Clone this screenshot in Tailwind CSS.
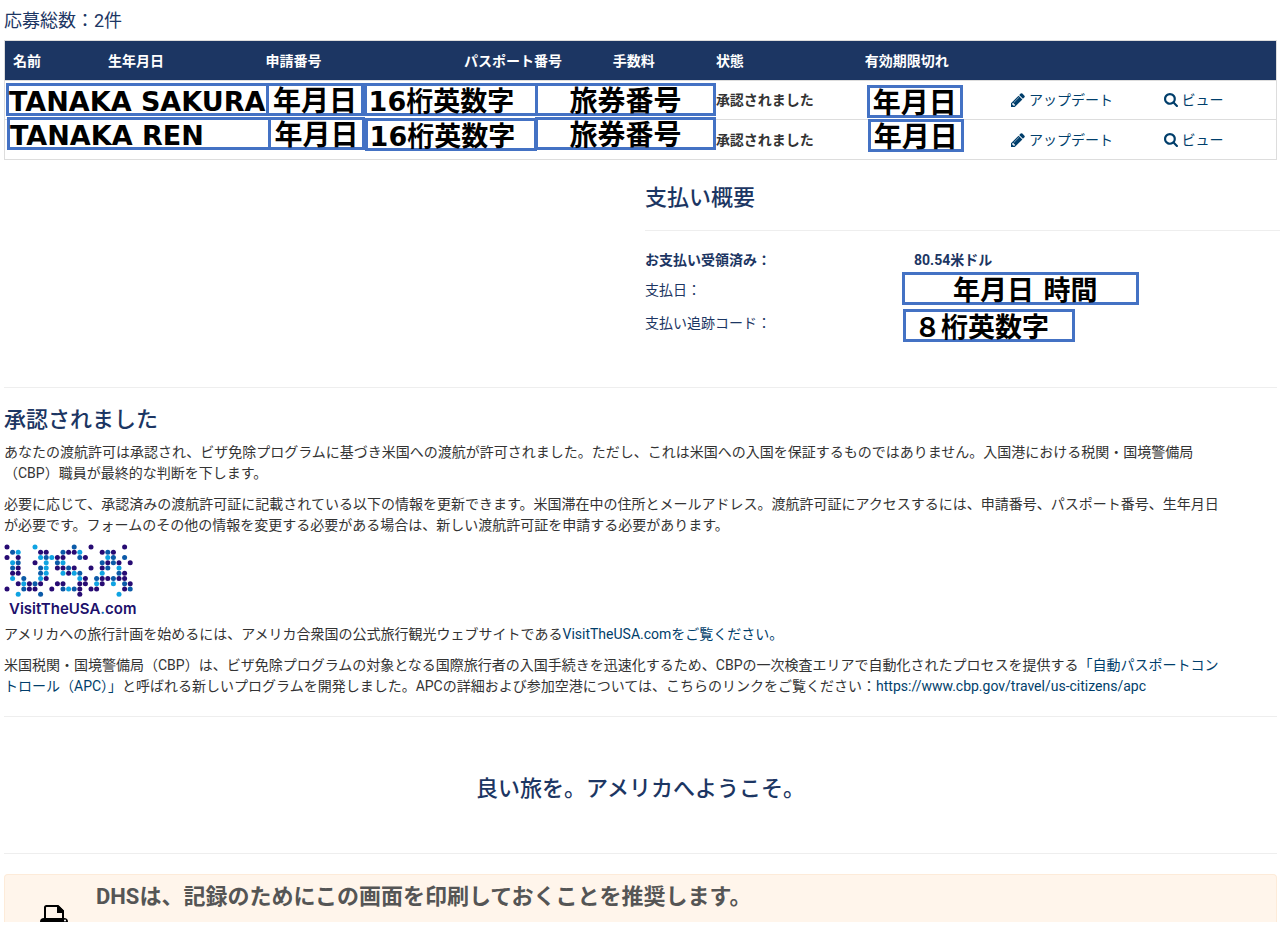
<!DOCTYPE html>
<html lang="ja">
<head>
<meta charset="utf-8">
<meta name="viewport" content="width=device-width, initial-scale=1">
<title>応募総数</title>
<script src="https://cdn.jsdelivr.net/npm/@tailwindcss/browser@4"></script>
</head>
<body class="bg-white font-[Roboto,'Noto_Sans_CJK_JP',sans-serif] text-sm text-[#333]">
<main class="overflow-x-hidden pl-1">
  <div class="mr-[5px]">
    <h1 class="pt-2 text-lg leading-[26px] text-[#1c3663]">応募総数：2件</h1>
    <table class="mt-1.5 w-full table-fixed border-collapse border border-[#ddd] text-left">
      <colgroup>
        <col class="w-[7.5%]"><col class="w-[12.4%]"><col class="w-[15.6%]"><col class="w-[11.7%]"><col class="w-[8.1%]"><col class="w-[11.7%]"><col class="w-[11.5%]"><col class="w-[12%]"><col>
      </colgroup>
      <thead class="bg-[#1c3663] text-white">
        <tr class="h-10 whitespace-nowrap">
          <th class="px-2 font-bold">名前</th>
          <th class="px-2 font-bold">生年月日</th>
          <th class="px-2 font-bold">申請番号</th>
          <th class="px-2 font-bold">パスポート番号</th>
          <th class="px-2 font-bold">手数料</th>
          <th class="px-2 font-bold">状態</th>
          <th class="px-2 font-bold">有効期限切れ</th>
          <th></th>
          <th></th>
        </tr>
      </thead>
      <tbody class="whitespace-nowrap">
        <tr class="h-[39px] border-t border-[#ddd]">
          <td class="relative"><span class="absolute left-px top-[2px] z-10 h-[33px] w-[264px] border-3 border-[#4472c4] bg-white font-['DejaVu_Sans','Noto_Sans_CJK_JP',sans-serif] text-[27px] font-bold leading-[31px] text-black">TANAKA SAKURA</span></td>
          <td class="relative"><span class="absolute left-[166px] top-[2px] z-10 h-[33px] w-[98px] border-3 border-[#4472c4] bg-white text-center font-['DejaVu_Sans','Noto_Sans_CJK_JP',sans-serif] text-[28px] font-bold leading-[31px] text-black">年月日</span></td>
          <td class="relative"><span class="absolute left-[106px] top-[2px] z-10 h-[33px] w-[174px] border-3 border-[#4472c4] bg-white pl-0.5 font-['DejaVu_Sans','Noto_Sans_CJK_JP',sans-serif] text-[27px] font-bold leading-[31px] text-black">16桁英数字</span></td>
          <td class="relative"><span class="absolute left-[79px] top-[2px] z-10 h-[33px] w-[181px] border-3 border-[#4472c4] bg-white text-center font-['DejaVu_Sans','Noto_Sans_CJK_JP',sans-serif] text-[28px] font-bold leading-[31px] text-black">旅券番号</span></td>
          <td></td>
          <td class="px-2 font-bold">承認されました</td>
          <td class="relative"><span class="absolute left-[10px] top-1 z-10 h-[33px] w-[96px] border-3 border-[#4472c4] bg-white text-center font-['DejaVu_Sans','Noto_Sans_CJK_JP',sans-serif] text-[28px] font-bold leading-[31px] text-black">年月日</span></td>
          <td class="px-2"><a href="#" class="flex items-center gap-1 text-[#003e6b]"><svg class="size-[14px]" viewBox="0 0 1536 1536" fill="currentColor" aria-hidden="true"><path d="M363 1408l91-91-235-235-91 91v107h128v128zM886 480q0-22-22-22-10 0-17 7l-542 542q-7 7-7 17 0 22 22 22 10 0 17-7l542-542q7-7 7-17zM832 288l416 416-832 832H0v-416zM1515 384q0 53-37 90l-166 166-416-416 166-165q36-38 90-38 53 0 91 38l235 234q37 39 37 91z"/></svg>アップデート</a></td>
          <td class="px-2"><a href="#" class="flex items-center gap-1 text-[#003e6b]"><svg class="size-[14px]" viewBox="0 0 1664 1664" fill="currentColor" aria-hidden="true"><path d="M1152 704q0-185-131.500-316.500T704 256 387.500 387.500 256 704t131.500 316.500T704 1152t316.500-131.500T1152 704zm512 832q0 52-38 90t-90 38q-54 0-90-38l-343-342q-179 124-399 124-143 0-273.500-55.500t-225-150-150-225T0 704t55.500-273.500 150-225 225-150T704 0t273.500 55.500 225 150 150 225T1408 704q0 220-124 399l343 343q37 37 37 90z"/></svg>ビュー</a></td>
        </tr>
        <tr class="h-10 border-t border-[#ddd]">
          <td class="relative"><span class="absolute left-0.5 top-[-3px] z-10 h-[33px] w-[264px] border-3 border-[#4472c4] bg-white font-['DejaVu_Sans','Noto_Sans_CJK_JP',sans-serif] text-[27px] font-bold leading-[31px] text-black">TANAKA REN</span></td>
          <td class="relative"><span class="absolute left-[168px] top-[-3px] z-10 h-[33px] w-[97px] border-3 border-[#4472c4] bg-white text-center font-['DejaVu_Sans','Noto_Sans_CJK_JP',sans-serif] text-[28px] font-bold leading-[31px] text-black">年月日</span></td>
          <td class="relative"><span class="absolute left-[107px] top-[-2px] z-10 h-[33px] w-[172px] border-3 border-[#4472c4] bg-white pl-0.5 font-['DejaVu_Sans','Noto_Sans_CJK_JP',sans-serif] text-[27px] font-bold leading-[31px] text-black">16桁英数字</span></td>
          <td class="relative"><span class="absolute left-[79px] top-[-3px] z-10 h-[33px] w-[181px] border-3 border-[#4472c4] bg-white text-center font-['DejaVu_Sans','Noto_Sans_CJK_JP',sans-serif] text-[28px] font-bold leading-[31px] text-black">旅券番号</span></td>
          <td></td>
          <td class="px-2 font-bold">承認されました</td>
          <td class="relative"><span class="absolute left-[11px] top-[-1px] z-10 h-[33px] w-[96px] border-3 border-[#4472c4] bg-white text-center font-['DejaVu_Sans','Noto_Sans_CJK_JP',sans-serif] text-[28px] font-bold leading-[31px] text-black">年月日</span></td>
          <td class="px-2"><a href="#" class="flex items-center gap-1 text-[#003e6b]"><svg class="size-[14px]" viewBox="0 0 1536 1536" fill="currentColor" aria-hidden="true"><path d="M363 1408l91-91-235-235-91 91v107h128v128zM886 480q0-22-22-22-10 0-17 7l-542 542q-7 7-7 17 0 22 22 22 10 0 17-7l542-542q7-7 7-17zM832 288l416 416-832 832H0v-416zM1515 384q0 53-37 90l-166 166-416-416 166-165q36-38 90-38 53 0 91 38l235 234q37 39 37 91z"/></svg>アップデート</a></td>
          <td class="px-2"><a href="#" class="flex items-center gap-1 text-[#003e6b]"><svg class="size-[14px]" viewBox="0 0 1664 1664" fill="currentColor" aria-hidden="true"><path d="M1152 704q0-185-131.500-316.500T704 256 387.500 387.500 256 704t131.500 316.500T704 1152t316.500-131.500T1152 704zm512 832q0 52-38 90t-90 38q-54 0-90-38l-343-342q-179 124-399 124-143 0-273.500-55.500t-225-150-150-225T0 704t55.500-273.500 150-225 225-150T704 0t273.500 55.500 225 150 150 225T1408 704q0 220-124 399l343 343q37 37 37 90z"/></svg>ビュー</a></td>
        </tr>
      </tbody>
    </table>
  </div>

  <section class="ml-[50%] mr-0.5 pl-0.5 pt-[22px] text-[#1c3663]">
    <h2 class="border-b border-[#eee] pb-4 text-[22px] font-medium leading-8">支払い概要</h2>
    <dl class="grid grid-cols-[257px_1fr] items-start pt-[14px]">
      <dt class="h-[27px] font-bold leading-[31px]">お支払い受領済み：</dt>
      <dd class="h-[27px] pl-3 font-bold leading-[31px]">80.54米ドル</dd>
      <dt class="pt-1 leading-7">支払日：</dt>
      <dd class="h-[33px] w-[237px] border-3 border-[#4472c4] text-center font-['DejaVu_Sans','Noto_Sans_CJK_JP',sans-serif] text-[27px] font-bold leading-[31px] text-black">&nbsp;年月日 時間</dd>
      <dt class="mt-1 leading-7">支払い追跡コード：</dt>
      <dd class="ml-px mt-1 h-[33px] w-[172px] border-3 border-[#4472c4] pl-2 font-['DejaVu_Sans','Noto_Sans_CJK_JP',sans-serif] text-[27px] font-bold leading-[31px] text-black">８桁英数字</dd>
    </dl>
  </section>

  <div class="mr-[5px]">
    <section class="mt-[45px] border-t border-[#eee] pb-[19px] leading-[21px]">
      <h2 class="mb-1.5 mt-4 text-[22px] font-medium leading-8 text-[#1c3663]">承認されました</h2>
      <p>あなたの渡航許可は承認され、ビザ免除プログラムに基づき米国への渡航が許可されました。ただし、これは米国への入国を保証するものではありません。入国港における税関・国境警備局<br>（CBP）職員が最終的な判断を下します。</p>
      <p class="mt-[10px]">必要に応じて、承認済みの渡航許可証に記載されている以下の情報を更新できます。米国滞在中の住所とメールアドレス。渡航許可証にアクセスするには、申請番号、パスポート番号、生年月日<br>が必要です。フォームのその他の情報を変更する必要がある場合は、新しい渡航許可証を申請する必要があります。</p>
      <a href="#" class="mt-2 block w-[134px]">
        <svg id="dots" class="block h-[56px] w-[134px]" viewBox="0 0 134 56" aria-hidden="true"></svg>
        <span class="block pl-[5px] font-[Inter,sans-serif] text-[15px] font-semibold leading-[18px] text-[#20106b]">VisitTheUSA<span class="text-[#0b6bb5]">.</span>com</span>
      </a>
      <p class="mt-1.5">アメリカへの旅行計画を始めるには、アメリカ合衆国の公式旅行観光ウェブサイトである<a href="#" class="text-[#003e6b]">VisitTheUSA.comをご覧ください。</a></p>
      <p class="mt-[10px]">米国税関・国境警備局（CBP）は、ビザ免除プログラムの対象となる国際旅行者の入国手続きを迅速化するため、CBPの一次検査エリアで自動化されたプロセスを提供する<a href="#" class="text-[#003e6b]">「自動パスポートコン<br>トロール（APC）」</a>と呼ばれる新しいプログラムを開発しました。APCの詳細および参加空港については、こちらのリンクをご覧ください：<a href="#" class="text-[#003e6b]">https://www.cbp.gov/travel/us-citizens/apc</a></p>
    </section>
    <section class="border-y border-[#eee] pb-12 pt-14 text-center text-[22px] font-medium leading-8 text-[#1c3663]">
      <p>良い旅を。アメリカへようこそ。</p>
    </section>
    <aside class="mt-5 flex h-12 overflow-hidden rounded-t-sm border border-b-0 border-[#fdebd9] bg-[#fff5eb]">
      <svg class="ml-[35px] mt-[30px] h-[28px] w-[28px] shrink-0" viewBox="0 0 28 28" aria-hidden="true">
        <path d="M0 27V17q0-4 4-4h20q4 0 4 4v10z"/>
        <path d="M5 14V2.500Q5 1 6.500 1H18l5 5v8z" fill="#fff5eb" stroke="#000" stroke-width="2"/>
        <path d="M17 1h2l5 5v2h-7z"/>
        <circle cx="25" cy="15.500" r="1" fill="#fff"/>
      </svg>
      <h2 class="ml-7 mt-1.5 whitespace-nowrap text-[22px] font-bold leading-8 text-[#555]">DHSは、記録のためにこの画面を印刷しておくことを推奨します。</h2>
    </aside>
  </div>
</main>
<script>
  // Dot-matrix "USA" mark: P purple, B blue, C cyan, dot for an empty cell.
  const rows = [
    'P....C......B..P.....P.',
    '.BC...PP..BPPC...PBP...',
    'P.P...CBCPP..BP...CB.B.',
    '.CB..P.C.BC......BPBP.P',
    '.BP...BC.PPBP..P.PB.C..',
    '.PP...BC..CPCB...C..BP.',
    '.C.B..CP.....CP.BPPBPP.',
    '..PCPBP..PP..PP.CP.C.BP',
    'P..BPP..P.BCBP.PP....PB',
    '..C...B......P......C..'
  ];
  const colors = { P: '#270b73', B: '#0b5aa8', C: '#0fa3e2' };
  const svg = document.getElementById('dots');
  rows.forEach((row, y) => [...row].forEach((c, x) => {
    if (c === '.') return;
    const dot = document.createElementNS('http://www.w3.org/2000/svg', 'circle');
    dot.setAttribute('cx', 3 + x * 5.6);
    dot.setAttribute('cy', 3 + y * 5.25);
    dot.setAttribute('r', 2.5);
    dot.setAttribute('fill', colors[c]);
    svg.append(dot);
  }));
</script>
</body>
</html>
